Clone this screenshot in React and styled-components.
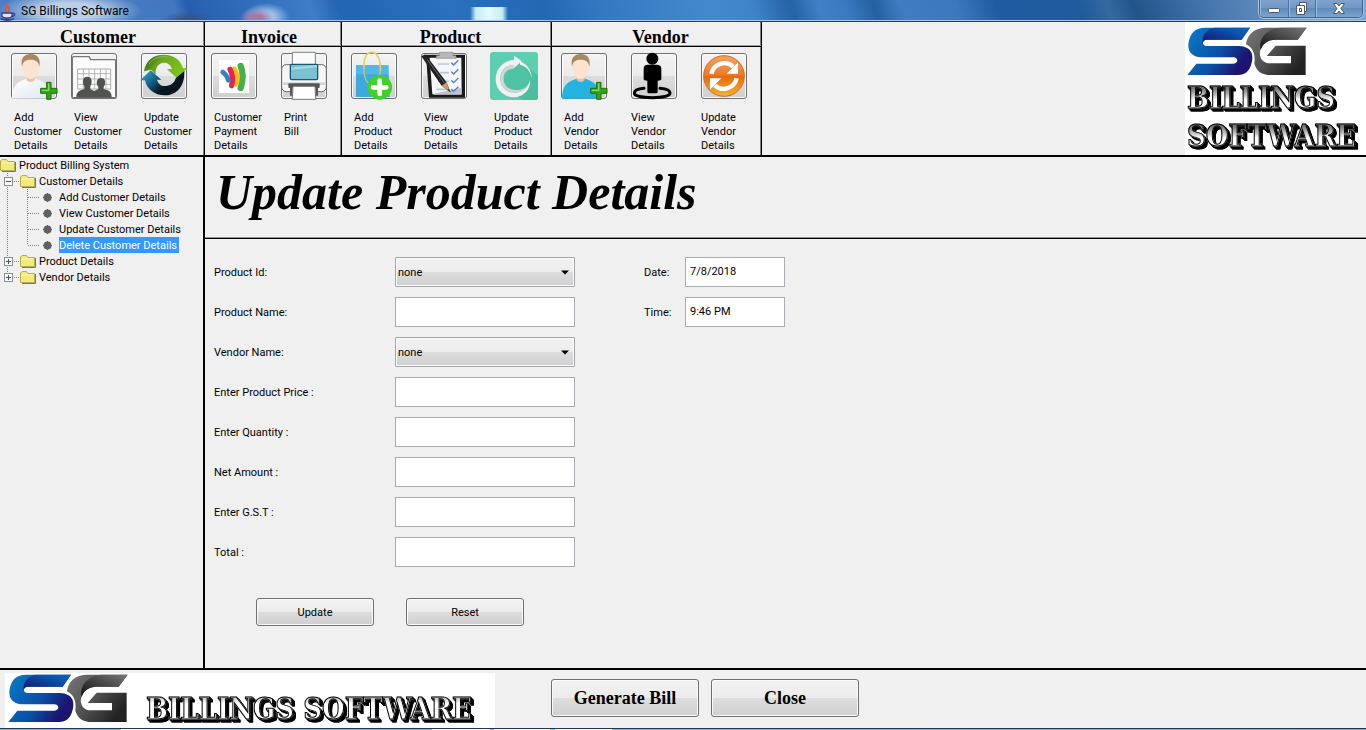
import React from "react";
import styled, { createGlobalStyle, css } from "styled-components";

const GlobalStyle = createGlobalStyle`
  *, *::before, *::after { box-sizing: border-box; }
  body {
    margin: 0;
    background: #f0f0f0;
    color: #000;
    font: 11px/14px Roboto, sans-serif;
  }
  button, input, select { font: inherit; color: inherit; }
`;

const raised = css`
  border: 1px solid #707070;
  border-radius: 3px;
  background: linear-gradient(#f3f3f3 0%, #ebebeb 50%, #dddddd 50%, #cfcfcf 100%);
  box-shadow: inset 0 0 0 1px #fafafa;
`;

const Window = styled.div`
  display: flex;
  flex-direction: column;
  min-height: 100vh;
`;

/* ---------- title bar ---------- */

const TitleBar = styled.header`
  display: flex;
  align-items: flex-start;
  height: 22px;
  flex: none;
  border-bottom: 1px solid #1d3c66;
  box-shadow: inset 0 -1px #a9c8ec;
  background:
    radial-gradient(ellipse 72px 20px at 70px 11px, #c3d5eaee 40%, #a8c4e300 100%),
    radial-gradient(ellipse 18px 10px at 257px 18px, #a878a8 30%, #a878a800 100%),
    radial-gradient(ellipse 24px 14px at 266px 17px, #a8c8f0 30%, #a8c8f000 100%),
    radial-gradient(ellipse 26px 9px at 188px 20px, #3a5584 20%, #3a558400 100%),
    linear-gradient(90deg, #6bb4ea00, #c4ecfa 15%, #e4faf8 50%, #c4ecfa 85%, #6bb4ea00) 470px 7px / 38px 14px no-repeat,
    linear-gradient(72deg, #4a7fc4 0%, #4178c0 13%, #265fae 14%, #3472be 20%, #3f7dc8 23%,
      #2265b2 25%, #2a70be 33%, #2468b4 40%, #3478c2 44%, #4488cc 52%, #3f84ca 55%, #2463a4 58%,
      #4080c6 60%, #3a79c0 62%, #2461a2 64%, #3f7cc2 66%, #3c78bc 70%, #1e5ba0 73%, #1f5a9c 79%,
      #34699f 81%, #22548a 83%, #4374ac 88%, #6f98c6 95%, #7ea6d2 100%);
`;

const AppName = styled.h1`
  display: flex;
  align-items: center;
  gap: 4px;
  flex: 1;
  margin: 0;
  font: 12px/22px Roboto, sans-serif;
`;

const WindowControls = styled.div`
  display: flex;
  height: 18px;
  margin-right: 3px;
  border: 1px solid #41618c;
  border-top: 0;
  border-radius: 0 0 5px 5px;
  box-shadow: 0 0 0 1px #a9c4e2;
  overflow: hidden;
`;

const ControlButton = styled.button`
  width: ${(p) => p.$width}px;
  padding: 0;
  border: 0;
  border-left: ${(p) => (p.$first ? "0" : "1px solid #4f719d")};
  background: linear-gradient(#7fa3cd, #6f97c5 50%, #5f8aba 50%, #7ba4d0);
  box-shadow: inset 1px 0 #9dbbdc;
  line-height: 0;
`;

/* ---------- toolbar ---------- */

const Toolbar = styled.div`
  display: flex;
  flex: none;
  border-bottom: 2px solid #000;
`;

const Group = styled.section`
  width: ${(p) => p.$width}px;
  height: 133px;
  border-right: 1px solid #000;
  box-shadow: inset -1px 0 #808080;
`;

const GroupTitle = styled.h2`
  height: 25px;
  margin: 0;
  padding: 6px ${(p) => (p.$shift === "left" ? "8px 0 0" : "0 0 8px")};
  border-bottom: 1px solid #000;
  box-shadow: inset 0 -1px #a0a0a0;
  font: bold 18px/18px "Liberation Serif", serif;
  text-align: center;
`;

const GroupItems = styled.div`
  display: flex;
  gap: 14px;
  padding: 6px 0 0 ${(p) => p.$indent}px;
`;

const Item = styled.div`
  display: flex;
  flex-direction: column;
  gap: 12px;
  width: ${(p) => p.$width || 56}px;
`;

const ToolButton = styled.button`
  ${raised}
  display: flex;
  align-items: center;
  justify-content: center;
  width: 46px;
  height: 46px;
  padding: 0;

  svg { flex: none; }
`;

const ItemLabel = styled.span`
  padding-left: ${(p) => (p.$flush ? 0 : 3)}px;
  white-space: pre-line;
`;

const BrandPanel = styled.div`
  display: flex;
  flex-direction: column;
  align-items: flex-start;
  width: 181px;
  margin-left: auto;
  padding: 5px 0 0 2px;
  background: #fff;

  svg { margin-bottom: 3px; }
`;

const Ornate = styled.span`
  font: bold 29px/38px "DejaVu Serif Condensed", "DejaVu Serif", serif;
  white-space: nowrap;
  color: transparent;
  -webkit-text-stroke: 1px #000;
  background: linear-gradient(#777 25%, #ccc 45%, #fff 55%);
  background-clip: text;
  filter: drop-shadow(1px 1px 0 #000) drop-shadow(2px 2px 0 #000);
`;

/* ---------- body ---------- */

const Body = styled.div`
  display: grid;
  grid-template-columns: 205px 1fr;
  flex: 1;
  border-bottom: 2px solid #000;
`;

const Sidebar = styled.nav`
  border-right: 2px solid #000;
`;

const TreeList = styled.ul`
  margin: 0;
  padding: 0;
  list-style: none;
`;

const TreeRow = styled.li`
  display: flex;
  height: 16px;
  line-height: 18px;

  svg { flex: none; }
`;

const TreeLink = styled.a`
  margin-left: 2px;
  padding-right: 2px;
  color: ${(p) => (p.$selected ? "#fff" : "#000")};
  background: ${(p) => (p.$selected ? "#3399ff" : "transparent")};
  text-decoration: none;
  white-space: nowrap;
`;

const PageTitle = styled.h2`
  height: 82px;
  margin: 0;
  padding: 7px 0 0 11px;
  border-bottom: 1px solid #000;
  box-shadow: inset 0 -1px #909090;
  font: italic bold 50px/56px "Liberation Serif", serif;
  white-space: nowrap;
`;

const Form = styled.form`
  padding: 18px 9px;
`;

const Columns = styled.div`
  display: flex;
  gap: 69px;
`;

const Fields = styled.div`
  display: grid;
  grid-template-columns: ${(p) => p.$columns};
  grid-auto-rows: 30px;
  gap: 10px 0;
  align-items: center;
  align-content: start;
`;

const FieldLabel = styled.label`
  padding-top: 2px;
`;

const TextBox = styled.input`
  width: 100%;
  height: 30px;
  padding: 0 4px 2px;
  border: 1px solid #abadb3;
  border-radius: 0;
  background: #fff;
  outline: none;
`;

const SelectBox = styled.div`
  position: relative;

  svg {
    position: absolute;
    right: 6px;
    top: 13px;
    pointer-events: none;
  }
`;

const Select = styled.select`
  ${raised}
  appearance: none;
  display: block;
  width: 100%;
  height: 30px;
  padding: 2px 2px 0;
  border-color: #a4a5a9;
  border-radius: 1px;
`;

const FormActions = styled.div`
  display: flex;
  gap: 32px;
  padding: 31px 0 0 42px;
`;

const FormButton = styled.button`
  ${raised}
  width: 118px;
  height: 28px;
  padding: 2px 0 0;
`;

/* ---------- footer ---------- */

const Footer = styled.footer`
  display: flex;
  flex: none;
  padding: 3px 5px 0;
`;

const FooterBrand = styled.div`
  display: flex;
  gap: 18px;
  width: 490px;
  height: 55px;
  padding: 1px 0 0 3px;
  background: #fff;

  ${Ornate} { padding-top: 16px; }
`;

const FooterActions = styled.div`
  display: flex;
  gap: 12px;
  padding: 6px 0 0 56px;
`;

const FooterButton = styled.button`
  ${raised}
  width: 148px;
  height: 38px;
  padding: 0;
  font: bold 18px/20px "Liberation Serif", serif;
`;

const TaskbarEdge = styled.div`
  flex: none;
  height: 2px;
  border-top: 1px solid #1b3854;
  background: linear-gradient(90deg, #8fb9d8 121px, #fff 121px 180px, #8fb9d8 180px 432px,
    #fff 432px 490px, #8fb9d8 490px 494px, #fff 494px 550px, #8fb9d8 550px 555px, #fff 555px 612px,
    #8fb9d8 612px, #8fa9c8);
`;

/* ---------- drawings ---------- */

function JavaCup() {
  return (
    <svg width="17" height="20" viewBox="0 0 17 20" fill="none" aria-hidden="true">
      <path d="M7 12C3 9 9 7 6 3M9.500 12C7 9 11 8 9 5" stroke="#e0532c" strokeWidth="1.6" />
      <path d="M2 12H12V15Q11 17 8 17H6Q3 17 2 15Z" fill="#dfe3f5" stroke="#3a3f86" strokeWidth="1.300" />
      <path d="M12 12.500Q15.500 12 14.500 14Q14 15.500 11.500 15.500" stroke="#3a3f86" strokeWidth="1.300" />
      <path d="M1 18Q7 20 14 18" stroke="#3a3f86" strokeWidth="1.800" />
    </svg>
  );
}

function SgLogo({ id }) {
  return (
    <svg width="120" height="49" viewBox="66 80 360 147" role="img" aria-label="SG">
      <defs>
        <linearGradient id={`${id}-s`} x1="0" y1="0.3" x2="1" y2="0.8">
          <stop offset="0" stopColor="#0a74c4" />
          <stop offset="0.5" stopColor="#0a4fa4" />
          <stop offset="0.85" stopColor="#1c1470" />
        </linearGradient>
        <linearGradient id={`${id}-t`} x1="0" y1="1" x2="1" y2="0">
          <stop offset="0" stopColor="#15106a" />
          <stop offset="0.7" stopColor="#0b55ac" />
          <stop offset="1" stopColor="#0d62b8" />
        </linearGradient>
        <linearGradient id={`${id}-g`} x1="0" y1="0" x2="1" y2="0.6">
          <stop offset="0" stopColor="#777" />
          <stop offset="0.5" stopColor="#555" />
          <stop offset="1" stopColor="#222" />
        </linearGradient>
        <linearGradient id={`${id}-h`} x1="0" y1="1" x2="1" y2="0">
          <stop offset="0" stopColor="#111" />
          <stop offset="1" stopColor="#777" />
        </linearGradient>
      </defs>
      <path fill={`url(#${id}-s)`} d="M255 82L230 118H125C110 118 110 137 125 137H222C262 139 268 165 258 195C251 214 240 224 220 224H67L94 190H205C221 190 221 171 205 171H110C78 170 66 150 71 125C77 96 92 82 120 82Z" />
      <path fill={`url(#${id}-t)`} d="M255 82L230 118H128C117 118 113 123 114 130C108 108 124 86 148 82Z" />
      <path fill={`url(#${id}-g)`} d="M425 82L398 118H330C275 120 270 189 315 189H378V167H305L332 136H422V224H318C290 224 274 212 268 190C272 160 263 142 243 132C246 104 266 84 300 82Z" />
      <path fill={`url(#${id}-h)`} d="M425 82L398 118H330C306 119 292 132 287 150C280 118 300 88 345 82Z" />
    </svg>
  );
}

function Drawing({ children }) {
  return (
    <svg width="50" height="50" viewBox="-6 -6 150 150" fill="none" aria-hidden="true">
      {children}
    </svg>
  );
}

function PersonAdd({ shirt, shade, id }) {
  return (
    <Drawing>
      <defs>
        <linearGradient id={id} x1="0" y1="0" x2="1" y2="1">
          <stop offset="0" stopColor={shirt} />
          <stop offset="1" stopColor={shade} />
        </linearGradient>
      </defs>
      <path d="M3 137C3 96 18 88 46 77H74C102 88 115 96 116 137Z" fill={`url(#${id})`} />
      <path d="M47 60H71V82Q59 92 47 82Z" fill="#e9bf9e" />
      <path d="M34 32C34 8 84 8 84 32C87 60 72 78 59 78C46 78 31 60 34 32Z" fill="#fbe3cf" />
      <path d="M33 42C28 14 40 3 59 3C78 3 90 14 85 42C83 26 76 20 59 20C42 20 35 26 33 42Z" fill="#a98763" />
      <path d="M107 88H120V106H138V121H120V139H107V121H89V106H107Z" fill="#35a318" stroke="#1d6f0c" strokeWidth="3" />
      <path d="M113 91V112H92" stroke="#86dd63" strokeWidth="4" />
    </Drawing>
  );
}

function FolderPeople() {
  return (
    <Drawing>
      <path d="M4 135V14Q4 11 8 11H54L59 20H131Q134 20 134 24V135Z" fill="#fbfbfb" stroke="#777" strokeWidth="4" />
      <path d="M20 48H119V108H20Z" fill="#fff" stroke="#aaa" strokeWidth="3" />
      <path d="M20 62H119M20 78H119M20 94H119M37 48V108M54 48V108M71 48V108M88 48V108M105 48V108" stroke="#b5b5b5" strokeWidth="3" />
      <path d="M16 132C16 114 28 112 40 108V100C32 86 36 71 49 71C62 71 66 86 58 100V108L69 114L82 108V102C73 90 77 75 90 75C103 75 107 90 98 102V108C112 112 122 114 122 132Z" fill="#50544f" />
      <path d="M8 134H130" stroke="#666" strokeWidth="4" />
    </Drawing>
  );
}

function SyncBall() {
  return (
    <Drawing>
      <defs>
        <linearGradient id="sync-green" x1="0" y1="0" x2="1" y2="0.4">
          <stop offset="0" stopColor="#234d0b" />
          <stop offset="0.4" stopColor="#6aa51e" />
          <stop offset="1" stopColor="#7ec41c" />
        </linearGradient>
        <linearGradient id="sync-blue" x1="0" y1="0" x2="1" y2="0.6">
          <stop offset="0" stopColor="#36b4e6" />
          <stop offset="0.4" stopColor="#155f85" />
          <stop offset="0.7" stopColor="#07151d" />
        </linearGradient>
      </defs>
      <path fill="url(#sync-green)" d="M9 55C14 22 38 5 68 5C99 5 120 22 126 46L139 45L108 76L78 49L93 48C87 33 76 28 64 30C50 33 42 47 44 66L30 50Z" />
      <path fill="url(#sync-blue)" d="M-2 82L29 52L61 80H48C52 94 63 101 75 99C94 97 102 86 104 76L130 54C132 98 108 127 72 127C40 127 17 108 12 82Z" />
      <path d="M24 34C35 14 60 8 80 12" stroke="#8aba55" strokeWidth="3" />
    </Drawing>
  );
}

function Wallet() {
  return (
    <Drawing>
      <path fill="#fff" d="M24 21H114V120H24Z" />
      <g strokeLinecap="round">
        <path d="M89 39Q101 68 89 105" stroke="#48b04a" strokeWidth="19" />
        <path d="M70 47Q84 70 76 94" stroke="#fbbc1b" strokeWidth="14" />
        <path d="M57 49Q69 72 62 98" stroke="#e9234b" strokeWidth="16" />
        <path d="M35 57Q48 66 52 82" stroke="#3483c5" strokeWidth="14" />
      </g>
    </Drawing>
  );
}

function Printer() {
  return (
    <Drawing>
      <rect x="2" y="35" width="134" height="81" rx="14" fill="#f7f7f7" stroke="#666" strokeWidth="3" />
      <path d="M4 92H134" stroke="#d5d5d5" strokeWidth="8" />
      <path d="M34-2H103V40H34Z" fill="#f8fafb" stroke="#808080" strokeWidth="3" />
      <rect x="28" y="34" width="82" height="46" rx="4" fill="#7cc0d4" stroke="#19576f" strokeWidth="4" />
      <path d="M31 47L108 39" stroke="#a8dbe8" strokeWidth="6" />
      <rect x="22" y="91" width="94" height="14" rx="3" fill="#555" />
      <path d="M27 105H35V128H27ZM103 105H111V128H103Z" fill="#555" />
      <path d="M36 100H102L104 139H34Z" fill="#fff" stroke="#777" strokeWidth="3" />
    </Drawing>
  );
}

function BagAdd() {
  return (
    <Drawing>
      <path d="M15 37H112L116 132H15Z" fill="#3ea9e0" />
      <path d="M15 37H112V64H15Z" fill="#55b7e8" />
      <path d="M39 48C37 10 50-2 62-2C77-2 90 15 88 55" stroke="#e9ce5c" strokeWidth="5" />
      <path d="M39 45C37 70 48 90 54 90M88 55Q86 70 82 76" stroke="#c9c46a" strokeWidth="4" />
      <circle cx="86" cy="103" r="37" fill="#42d02c" />
      <path d="M86 83V123M66 103H106" stroke="#fff" strokeWidth="14" strokeLinecap="round" />
    </Drawing>
  );
}

function Clipboard() {
  return (
    <Drawing>
      <path d="M15 5H132V134H24Z" fill="#191919" />
      <path d="M26 14H121L122 124H34Z" fill="#f4f6fa" />
      <path d="M38 122L121 104V125H38Z" fill="#bfc3ca" />
      <path d="M55-2H96V8H105V16H46V8H55Z" fill="#b7b7b7" stroke="#888" strokeWidth="2" />
      <path d="M51 33H84M57 59H84M51 85H84M46 109H84" stroke="#bcc3d2" strokeWidth="5" />
      <path d="M91 29L98 36L112 22M91 56L98 63L112 49M91 82L98 89L112 75M91 108L98 115L112 101" stroke="#4a80d4" strokeWidth="4" />
      <path d="M1 10L13 4L76 87L89 118L62 98Z" fill="#222" />
      <path d="M62 98L76 88L89 118Z" fill="#c99d62" />
      <path d="M82 107L91 119L79 111Z" fill="#222" />
      <path d="M19 20L70 90" stroke="#666" strokeWidth="3" />
    </Drawing>
  );
}

function MintRefresh() {
  return (
    <Drawing>
      <rect x="-3" y="-3" width="144" height="144" rx="10" fill="#5dcfb0" />
      <path d="M90 23L141 68V131Q141 141 131 141H98L35 110Z" fill="#4cbfa0" />
      <circle cx="69" cy="77" r="44" fill="#4fc3a4" />
      <path d="M70 8L92 24L67 47V36C43 37 27 54 28 78C29 104 48 120 72 119C96 118 113 102 117 80C121 106 98 133 69 133C38 133 13 108 14 77C15 46 39 22 69 21Z" fill="#f1f1f4" />
      <path d="M86 25C107 31 123 52 122 77C120 56 107 40 87 35Z" fill="#f1f1f4" />
      <path d="M67 36C43 37 27 54 28 78C29 104 48 120 72 119C96 118 113 102 117 80C111 104 94 112 74 111C52 110 37 97 38 75C39 58 50 48 67 47Z" fill="#d2d5d8" />
    </Drawing>
  );
}

function StandingPerson() {
  return (
    <Drawing>
      <path d="M39 106C20 108 10 113 10 120C10 129 33 134 64 134C94 134 117 129 117 120C117 113 107 108 87 106" stroke="#000" strokeWidth="9" strokeLinecap="round" />
      <circle cx="64" cy="17" r="18" fill="#000" />
      <path d="M48 35H80Q91 36 91 48V78Q91 83 80 83V116Q80 121 75 121H54Q49 121 49 116V83Q38 83 38 78V48Q38 36 48 35Z" fill="#000" />
    </Drawing>
  );
}

function OrangeSync() {
  return (
    <Drawing>
      <defs>
        <linearGradient id="orange" x1="0" y1="0" x2="0" y2="1">
          <stop offset="0" stopColor="#f5a263" />
          <stop offset="0.48" stopColor="#ee7a27" />
          <stop offset="0.5" stopColor="#e8680e" />
          <stop offset="1" stopColor="#f9b12e" />
        </linearGradient>
      </defs>
      <circle cx="69" cy="69" r="61" fill="url(#orange)" stroke="#d36a26" strokeWidth="3" />
      <path d="M31 62A40 40 0 0 1 97 41M107 76A40 40 0 0 1 41 97" stroke="#fff" strokeWidth="13" />
      <path d="M111 28V62H77ZM27 110V76H61Z" fill="#fff" />
    </Drawing>
  );
}

function Folder() {
  return (
    <svg width="17" height="16" viewBox="0 0 17 16" aria-hidden="true">
      <path d="M2 14.500H15.500V5" fill="none" stroke="#77775a" />
      <path d="M0.500 4L2 2.500H6.500L8 4.500H14.500V13.500H0.500Z" fill="#f3ea7c" stroke="#b5ae52" />
      <path d="M2 6H13" stroke="#fbf6b4" />
    </svg>
  );
}

function Leaf() {
  return (
    <svg width="17" height="16" viewBox="0 0 17 16" aria-hidden="true">
      <path d="M7.500 4V13M3 8.500H12" stroke="#606060" />
      <circle cx="7.500" cy="8.500" r="4" fill="#606060" />
    </svg>
  );
}

function Guide({ kind, expanded, end }) {
  const dots = { stroke: "#808080", strokeDasharray: "1 1" };
  return (
    <svg width="20" height="16" viewBox="0 0 20 16" shapeRendering="crispEdges" aria-hidden="true">
      <path d={end ? "M7.500 0V8" : "M7.500 0V16"} {...dots} />
      {kind !== "line" && <path d="M8 8.500H20" {...dots} />}
      {kind === "toggle" && (
        <>
          <rect x="4.500" y="4.500" width="8" height="8" fill="#fafafa" stroke="#8c8c8c" />
          <path d={expanded ? "M6 8.500H11" : "M6 8.500H11M8.500 6V11"} stroke="#3c50a0" />
        </>
      )}
    </svg>
  );
}

/* ---------- data ---------- */

const groups = [
  {
    title: "Customer", width: 205, indent: 11, shift: "left",
    items: [
      { label: "Add\nCustomer\nDetails", width: 46, icon: <PersonAdd id="shirt-white" shirt="#ffffff" shade="#dfe5ef" /> },
      { label: "View\nCustomer\nDetails", icon: <FolderPeople /> },
      { label: "Update\nCustomer\nDetails", icon: <SyncBall /> },
    ],
  },
  {
    title: "Invoice", width: 137, indent: 6, shift: "left",
    items: [
      { label: "Customer\nPayment\nDetails", icon: <Wallet /> },
      { label: "Print\nBill", icon: <Printer /> },
    ],
  },
  {
    title: "Product", width: 210, indent: 9, shift: "right",
    items: [
      { label: "Add\nProduct\nDetails", icon: <BagAdd /> },
      { label: "View\nProduct\nDetails", icon: <Clipboard /> },
      { label: "Update\nProduct\nDetails", icon: <MintRefresh /> },
    ],
  },
  {
    title: "Vendor", width: 210, indent: 9, shift: "right",
    items: [
      { label: "Add\nVendor\nDetails", icon: <PersonAdd id="shirt-blue" shirt="#22b5e6" shade="#2ab0da" /> },
      { label: "View\nVendor\nDetails", flush: true, icon: <StandingPerson /> },
      { label: "Update\nVendor\nDetails", flush: true, icon: <OrangeSync /> },
    ],
  },
];

const customerPages = ["Add Customer Details", "View Customer Details", "Update Customer Details", "Delete Customer Details"];

const fields = [
  { id: "product-id", label: "Product Id:", select: true },
  { id: "product-name", label: "Product Name:" },
  { id: "vendor-name", label: "Vendor Name:", select: true },
  { id: "price", label: "Enter Product Price :" },
  { id: "quantity", label: "Enter Quantity :" },
  { id: "net", label: "Net Amount :" },
  { id: "gst", label: "Enter G.S.T :" },
  { id: "total", label: "Total :" },
];

function Dropdown({ id }) {
  return (
    <SelectBox>
      <Select id={id}>
        <option>none</option>
      </Select>
      <svg width="8" height="5" viewBox="0 0 8 5" aria-hidden="true">
        <path d="M0 0.500H8L4 4.500Z" />
      </svg>
    </SelectBox>
  );
}

function Tree() {
  return (
    <Sidebar aria-label="Product Billing System">
      <TreeList>
        <TreeRow><Folder /><TreeLink href="#home">Product Billing System</TreeLink></TreeRow>
        <TreeRow>
          <Guide kind="toggle" expanded /><Folder /><TreeLink href="#customer">Customer Details</TreeLink>
        </TreeRow>
        {customerPages.map((name, i) => (
          <TreeRow key={name}>
            <Guide kind="line" />
            <Guide kind="branch" end={i === customerPages.length - 1} />
            <Leaf />
            <TreeLink href="#customer" $selected={i === customerPages.length - 1}>{name}</TreeLink>
          </TreeRow>
        ))}
        <TreeRow><Guide kind="toggle" /><Folder /><TreeLink href="#product">Product Details</TreeLink></TreeRow>
        <TreeRow><Guide kind="toggle" end /><Folder /><TreeLink href="#vendor">Vendor Details</TreeLink></TreeRow>
      </TreeList>
    </Sidebar>
  );
}

export default function App() {
  return (
    <Window>
      <GlobalStyle />
      <TitleBar>
        <AppName><JavaCup />SG Billings Software</AppName>
        <WindowControls>
          <ControlButton $width={28} $first aria-label="Minimize">
            <svg width="14" height="14" viewBox="0 0 14 14"><rect x="1.500" y="6.500" width="11" height="4" rx="1" fill="#fff" stroke="#535666" /></svg>
          </ControlButton>
          <ControlButton $width={27} aria-label="Restore">
            <svg width="14" height="14" viewBox="0 0 14 14" stroke="#535666">
              <path fill="#fff" d="M4.500 0.500H11.500V9.500H4.500Z" />
              <path fill="#fff" fillRule="evenodd" d="M1.500 3.500H9.500V12.500H1.500ZM4.500 6.500V9.500H6.500V6.500Z" />
            </svg>
          </ControlButton>
          <ControlButton $width={47} aria-label="Close window">
            <svg width="14" height="14" viewBox="0 0 14 14"><path fill="#fff" stroke="#535666" d="M1.500 1.500H5L7 4L9 1.500H12.500L9 6.500L12.500 11.500H9L7 9L5 11.500H1.500L5 6.500Z" /></svg>
          </ControlButton>
        </WindowControls>
      </TitleBar>

      <Toolbar>
        {groups.map((g) => (
          <Group key={g.title} $width={g.width}>
            <GroupTitle $shift={g.shift}>{g.title}</GroupTitle>
            <GroupItems $indent={g.indent}>
              {g.items.map((item) => (
                <Item key={item.label} $width={item.width}>
                  <ToolButton aria-label={item.label.replace(/\n/g, " ")}>{item.icon}</ToolButton>
                  <ItemLabel $flush={item.flush}>{item.label}</ItemLabel>
                </Item>
              ))}
            </GroupItems>
          </Group>
        ))}
        <BrandPanel>
          <SgLogo id="top" />
          <Ornate>BILLINGS</Ornate>
          <Ornate>SOFTWARE</Ornate>
        </BrandPanel>
      </Toolbar>

      <Body>
        <Tree />
        <main>
          <PageTitle>Update Product Details</PageTitle>
          <Form onSubmit={(e) => e.preventDefault()}>
            <Columns>
              <Fields $columns="181px 180px">
                {fields.map((f) => (
                  <React.Fragment key={f.id}>
                    <FieldLabel htmlFor={f.id}>{f.label}</FieldLabel>
                    {f.select ? <Dropdown id={f.id} /> : <TextBox id={f.id} />}
                  </React.Fragment>
                ))}
              </Fields>
              <Fields $columns="41px 100px">
                <FieldLabel htmlFor="date">Date:</FieldLabel>
                <TextBox id="date" defaultValue="7/8/2018" />
                <FieldLabel htmlFor="time">Time:</FieldLabel>
                <TextBox id="time" defaultValue="9:46 PM" />
              </Fields>
            </Columns>
            <FormActions>
              <FormButton type="submit">Update</FormButton>
              <FormButton type="reset">Reset</FormButton>
            </FormActions>
          </Form>
        </main>
      </Body>

      <Footer>
        <FooterBrand>
          <SgLogo id="bottom" />
          <Ornate>BILLINGS SOFTWARE</Ornate>
        </FooterBrand>
        <FooterActions>
          <FooterButton>Generate Bill</FooterButton>
          <FooterButton>Close</FooterButton>
        </FooterActions>
      </Footer>
      <TaskbarEdge />
    </Window>
  );
}
